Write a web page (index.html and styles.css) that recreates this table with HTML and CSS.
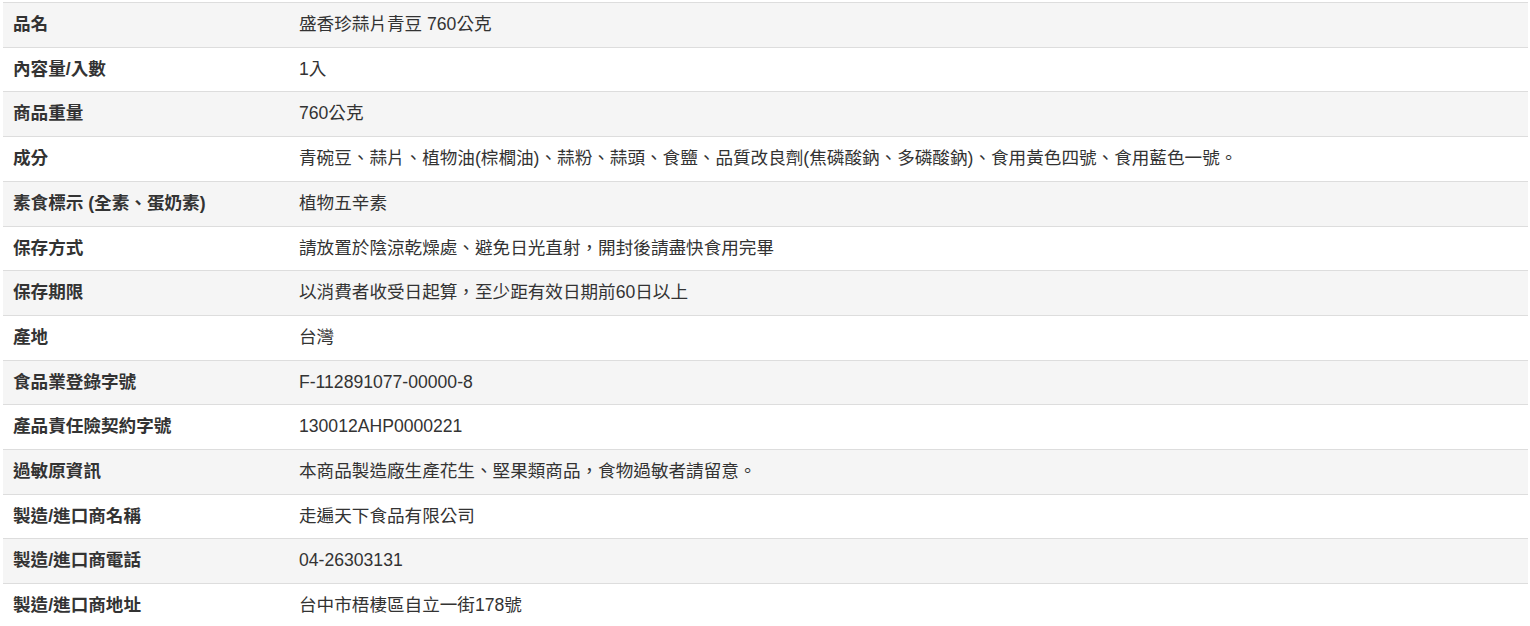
FILE: index.html
```html
<!DOCTYPE html>
<html lang="zh-Hant">
<head>
<meta charset="utf-8">
<title>商品規格</title>
<link rel="stylesheet" href="styles.css">
</head>
<body>
<div class="wrap">
<table class="spec">
<tbody>
<tr><th>品名</th><td>盛香珍蒜片青豆 760公克</td></tr>
<tr><th>內容量/入數</th><td>1入</td></tr>
<tr><th>商品重量</th><td>760公克</td></tr>
<tr><th>成分</th><td>青碗豆、蒜片、植物油(棕櫚油)、蒜粉、蒜頭、食鹽、品質改良劑(焦磷酸鈉、多磷酸鈉)、食用黃色四號、食用藍色一號。</td></tr>
<tr><th>素食標示 (全素、蛋奶素)</th><td>植物五辛素</td></tr>
<tr><th>保存方式</th><td>請放置於陰涼乾燥處、避免日光直射，開封後請盡快食用完畢</td></tr>
<tr><th>保存期限</th><td>以消費者收受日起算，至少距有效日期前60日以上</td></tr>
<tr><th>產地</th><td>台灣</td></tr>
<tr><th>食品業登錄字號</th><td>F-112891077-00000-8</td></tr>
<tr><th>產品責任險契約字號</th><td>130012AHP0000221</td></tr>
<tr><th>過敏原資訊</th><td>本商品製造廠生產花生、堅果類商品，食物過敏者請留意。</td></tr>
<tr><th>製造/進口商名稱</th><td>走遍天下食品有限公司</td></tr>
<tr><th>製造/進口商電話</th><td>04-26303131</td></tr>
<tr><th>製造/進口商地址</th><td>台中市梧棲區自立一街178號</td></tr>
</tbody>
</table>
</div>
</body>
</html>
```
FILE: styles.css
```css
html, body {
  margin: 0;
  padding: 0;
  background: #fff;
}
.wrap {
  padding: 2px 2px 0 3px;
}
.spec {
  width: 100%;
  border-collapse: collapse;
  border-spacing: 0;
  font-family: "Liberation Sans", Arial, "Noto Sans CJK TC", sans-serif;
  font-size: 17.6px;
  color: #333;
}
.spec th,
.spec td {
  border-top: 1px solid #ddd;
  padding: 10px 10px;
  line-height: 23.7px;
  text-align: left;
  vertical-align: top;
  white-space: nowrap;
}
.spec th {
  width: 266px;
  font-weight: bold;
}
.spec td {
  font-weight: normal;
}
.spec tr:nth-child(odd) {
  background: #f5f5f5;
}
```
